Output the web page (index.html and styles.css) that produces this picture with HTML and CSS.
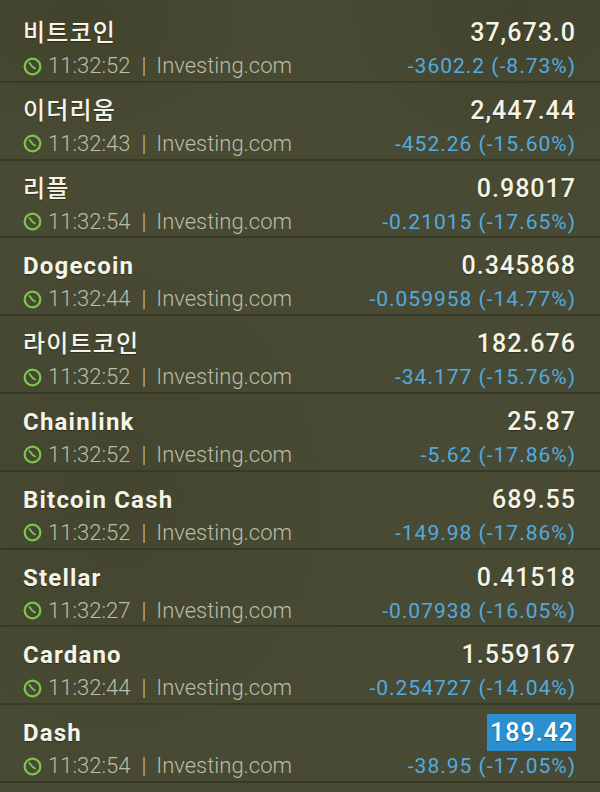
FILE: index.html
```html
<!DOCTYPE html>
<html lang="ko">
<head>
    <meta charset="UTF-8">
    <meta name="viewport" content="width=device-width, initial-scale=1.0">
    <title>Crypto Quotes</title>
    <link rel="stylesheet" href="styles.css">
</head>
<body>

<div class="quote-list">
    <div class="quote-row">
        <div class="quote-left">
            <div class="name ko">비트코인</div>
            <div class="meta"><svg class="clock" viewBox="0 0 16 16"><circle cx="8" cy="8" r="6.6"/><path d="M5.4 5.0 L8.2 8.4 L10.2 9.6"/></svg>11:32:52<span class="sep">|</span>Investing.com</div>
        </div>
        <div class="quote-right">
            <div class="price">37,673.0</div>
            <div class="change">-3602.2 (-8.73%)</div>
        </div>
    </div>
    <div class="quote-row">
        <div class="quote-left">
            <div class="name ko">이더리움</div>
            <div class="meta"><svg class="clock" viewBox="0 0 16 16"><circle cx="8" cy="8" r="6.6"/><path d="M5.4 5.0 L8.2 8.4 L10.2 9.6"/></svg>11:32:43<span class="sep">|</span>Investing.com</div>
        </div>
        <div class="quote-right">
            <div class="price">2,447.44</div>
            <div class="change">-452.26 (-15.60%)</div>
        </div>
    </div>
    <div class="quote-row">
        <div class="quote-left">
            <div class="name ko">리플</div>
            <div class="meta"><svg class="clock" viewBox="0 0 16 16"><circle cx="8" cy="8" r="6.6"/><path d="M5.4 5.0 L8.2 8.4 L10.2 9.6"/></svg>11:32:54<span class="sep">|</span>Investing.com</div>
        </div>
        <div class="quote-right">
            <div class="price">0.98017</div>
            <div class="change">-0.21015 (-17.65%)</div>
        </div>
    </div>
    <div class="quote-row">
        <div class="quote-left">
            <div class="name">Dogecoin</div>
            <div class="meta"><svg class="clock" viewBox="0 0 16 16"><circle cx="8" cy="8" r="6.6"/><path d="M5.4 5.0 L8.2 8.4 L10.2 9.6"/></svg>11:32:44<span class="sep">|</span>Investing.com</div>
        </div>
        <div class="quote-right">
            <div class="price">0.345868</div>
            <div class="change">-0.059958 (-14.77%)</div>
        </div>
    </div>
    <div class="quote-row">
        <div class="quote-left">
            <div class="name ko">라이트코인</div>
            <div class="meta"><svg class="clock" viewBox="0 0 16 16"><circle cx="8" cy="8" r="6.6"/><path d="M5.4 5.0 L8.2 8.4 L10.2 9.6"/></svg>11:32:52<span class="sep">|</span>Investing.com</div>
        </div>
        <div class="quote-right">
            <div class="price">182.676</div>
            <div class="change">-34.177 (-15.76%)</div>
        </div>
    </div>
    <div class="quote-row">
        <div class="quote-left">
            <div class="name">Chainlink</div>
            <div class="meta"><svg class="clock" viewBox="0 0 16 16"><circle cx="8" cy="8" r="6.6"/><path d="M5.4 5.0 L8.2 8.4 L10.2 9.6"/></svg>11:32:52<span class="sep">|</span>Investing.com</div>
        </div>
        <div class="quote-right">
            <div class="price">25.87</div>
            <div class="change">-5.62 (-17.86%)</div>
        </div>
    </div>
    <div class="quote-row">
        <div class="quote-left">
            <div class="name">Bitcoin Cash</div>
            <div class="meta"><svg class="clock" viewBox="0 0 16 16"><circle cx="8" cy="8" r="6.6"/><path d="M5.4 5.0 L8.2 8.4 L10.2 9.6"/></svg>11:32:52<span class="sep">|</span>Investing.com</div>
        </div>
        <div class="quote-right">
            <div class="price">689.55</div>
            <div class="change">-149.98 (-17.86%)</div>
        </div>
    </div>
    <div class="quote-row">
        <div class="quote-left">
            <div class="name">Stellar</div>
            <div class="meta"><svg class="clock" viewBox="0 0 16 16"><circle cx="8" cy="8" r="6.6"/><path d="M5.4 5.0 L8.2 8.4 L10.2 9.6"/></svg>11:32:27<span class="sep">|</span>Investing.com</div>
        </div>
        <div class="quote-right">
            <div class="price">0.41518</div>
            <div class="change">-0.07938 (-16.05%)</div>
        </div>
    </div>
    <div class="quote-row">
        <div class="quote-left">
            <div class="name">Cardano</div>
            <div class="meta"><svg class="clock" viewBox="0 0 16 16"><circle cx="8" cy="8" r="6.6"/><path d="M5.4 5.0 L8.2 8.4 L10.2 9.6"/></svg>11:32:44<span class="sep">|</span>Investing.com</div>
        </div>
        <div class="quote-right">
            <div class="price">1.559167</div>
            <div class="change">-0.254727 (-14.04%)</div>
        </div>
    </div>
    <div class="quote-row">
        <div class="quote-left">
            <div class="name">Dash</div>
            <div class="meta"><svg class="clock" viewBox="0 0 16 16"><circle cx="8" cy="8" r="6.6"/><path d="M5.4 5.0 L8.2 8.4 L10.2 9.6"/></svg>11:32:54<span class="sep">|</span>Investing.com</div>
        </div>
        <div class="quote-right">
            <div class="price"><span class="flash">189.42</span></div>
            <div class="change">-38.95 (-17.05%)</div>
        </div>
    </div>
</div>

</body>
</html>
```

FILE: styles.css
```css
    body {
        margin: 0;
        width: 600px;
        height: 792px;
        overflow: hidden;
        font-family: 'Roboto', 'Noto Sans CJK KR', sans-serif;
        background-color: #484a33;
        background-image:
            radial-gradient(ellipse 180px 120px at 80px 20px, rgba(30, 30, 15, 0.16), transparent),
            radial-gradient(ellipse 200px 160px at 520px 10px, rgba(30, 30, 15, 0.14), transparent),
            radial-gradient(ellipse 260px 300px at 120px 500px, rgba(30, 30, 15, 0.1), transparent);
    }
    .quote-list {
        padding-top: 5px;
    }
    .quote-row {
        display: flex;
        justify-content: space-between;
        box-sizing: border-box;
        height: 77.8px;
        padding: 12px 24px 0 23px;
        border-bottom: 2px solid #383a29;
    }
    .name, .price {
        line-height: 32px;
        color: #f5f4e6;
        text-shadow: 0 1px 1px rgba(0, 0, 0, 0.35);
        white-space: nowrap;
    }
    .name {
        font-size: 24px;
        font-weight: 700;
        letter-spacing: 1.2px;
    }
    .name.ko {
        font-weight: 500;
        letter-spacing: 1.2px;
    }
    .price {
        font-size: 25px;
        font-weight: 500;
        letter-spacing: 1px;
        text-align: right;
    }
    .meta, .change {
        line-height: 32px;
        white-space: nowrap;
        margin-top: 1px;
    }
    .meta {
        display: flex;
        align-items: center;
        font-size: 22px;
        font-weight: 300;
        color: #bcbca8;
    }
    .change {
        font-size: 21px;
        color: #52abe0;
        text-align: right;
        letter-spacing: 1px;
    }
    .clock {
        width: 19px;
        height: 19px;
        margin: 0 6px 0 0;
        fill: none;
        stroke: #7cc64e;
        stroke-width: 1.9;
        stroke-linecap: round;
    }
    .clock path {
        stroke-width: 1.5;
    }
    .sep {
        margin: 0 10px 0 11px;
    }
    .flash {
        background-color: #2b8fd0;
        color: #ffffff;
        padding: 4px 2px 4px 3px;
    }
```
